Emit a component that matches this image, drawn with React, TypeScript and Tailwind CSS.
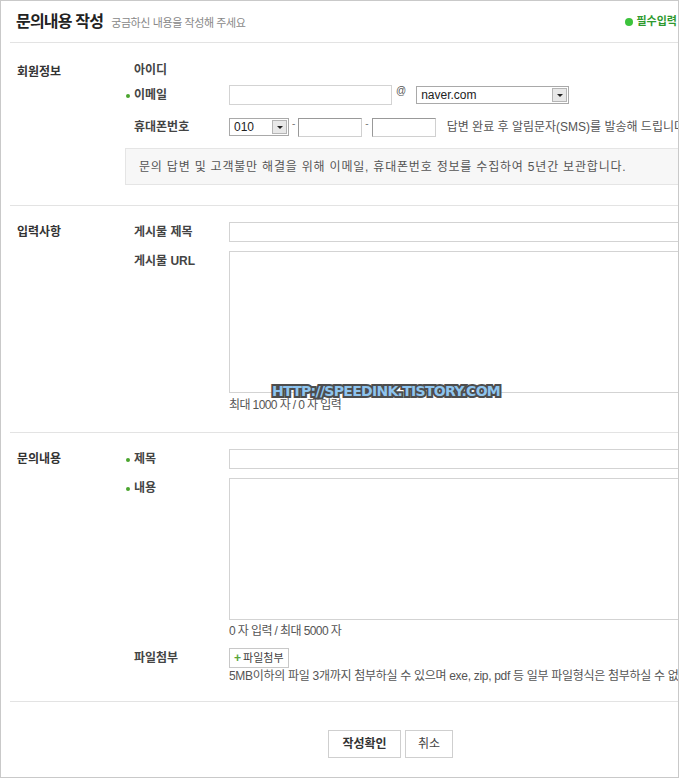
import React from 'react'

const font = 'font-["Liberation_Sans","Noto_Sans_CJK_KR",sans-serif]'

// 녹색 필수 표시 점
function Dot() {
  return <span className="absolute left-[-8px] top-[7px] h-[4px] w-[4px] rounded-full bg-[#4aa52e]" />
}

function FieldLabel({ children, required }: { children: React.ReactNode; required?: boolean }) {
  return (
    <div className="relative w-[95px] shrink-0 text-[12px] font-bold leading-[16px] text-[#444]">
      {required && <Dot />}
      {children}
    </div>
  )
}

function FakeSelect({ value, width }: { value: string; width: string }) {
  return (
    <div className={`flex h-[18px] items-center border border-[#a9a9a9] bg-white ${width}`}>
      <span className="flex-1 pl-[4px] text-[12px] leading-[16px] text-[#222]">{value}</span>
      <span className="mr-[1px] flex h-[14px] w-[15px] items-center justify-center border border-[#b5b5b5] bg-[#e8e8e8]">
        <span className="h-0 w-0 border-x-[3px] border-t-[3px] border-x-transparent border-t-[#222]" />
      </span>
    </div>
  )
}

export default function App() {
  return (
    <div className={`${font} h-[779px] w-[680px] bg-white`}>
      <div className="relative h-[778px] w-[679px] overflow-hidden border border-[#c9c9c9] bg-white">
        {/* 헤더 */}
        <div className="ml-[9px] flex h-[42px] w-[900px] shrink-0 items-center border-b border-[#e3e3e3]">
          <h1 className="ml-[6px] text-[16px] font-bold tracking-[-0.8px] text-[#222]">문의내용 작성</h1>
          <span className="ml-[8px] mt-[3px] text-[11px] tracking-[-0.4px] text-[#888]">궁금하신 내용을 작성해 주세요</span>
          <span className="w-[379px] shrink-0" />
          <span className="mt-[1px] h-[8px] w-[8px] shrink-0 rounded-full bg-[#3cc33c]" />
          <span className="ml-[4px] shrink-0 whitespace-nowrap text-[11px] font-bold text-[#2f9a2f]">필수입력</span>
        </div>

        {/* 회원정보 */}
        <div className="ml-[9px] flex w-[900px] border-b border-[#e3e3e3] pb-[20px] pt-[19px]">
          <div className="mt-[2px] w-[115px] shrink-0 pl-[7px] text-[12px] font-bold leading-[16px] text-[#333]">회원정보</div>
          <div className="flex-1">
            <div className="flex h-[16px] pl-[9px]">
              <FieldLabel>아이디</FieldLabel>
            </div>
            <div className="mt-[7px] flex h-[20px] items-start pl-[9px]">
              <div className="pt-[2px]">
                <FieldLabel required>이메일</FieldLabel>
              </div>
              <div className="h-[20px] w-[163px] border border-[#d3d3d3]" />
              <span className="ml-[4px] mt-[-2px] text-[10px] text-[#555]">@</span>
              <div className="ml-[10px] mt-[1px]">
                <FakeSelect value="naver.com" width="w-[153px]" />
              </div>
            </div>
            <div className="mt-[13px] flex h-[18px] items-center pl-[9px]">
              <FieldLabel>휴대폰번호</FieldLabel>
              <FakeSelect value="010" width="w-[60px]" />
              <span className="ml-[3px] mt-[-8px] text-[10px] text-[#777]">-</span>
              <div className="ml-[3px] h-[19px] w-[64px] border border-[#d0d0d0] border-l-[#999] border-t-[#999]" />
              <span className="ml-[3px] mt-[-8px] text-[10px] text-[#777]">-</span>
              <div className="ml-[3px] h-[19px] w-[64px] border border-[#d0d0d0] border-l-[#999] border-t-[#999]" />
              <span className="ml-[11px] text-[12px] text-[#555]">답변 완료 후 알림문자(SMS)를 발송해 드립니다.</span>
            </div>
            <div className="mt-[12px] flex h-[37px] items-center border border-[#e5e5e5] bg-[#f7f7f7] pl-[13px] text-[12px] tracking-[0.8px] text-[#555]">
              문의 답변 및 고객불만 해결을 위해 이메일, 휴대폰번호 정보를 수집하여 5년간 보관합니다.
            </div>
          </div>
        </div>

        {/* 입력사항 */}
        <div className="ml-[9px] flex w-[900px] border-b border-[#e3e3e3] pb-[19px] pt-[16px]">
          <div className="mt-[2px] w-[115px] shrink-0 pl-[7px] text-[12px] font-bold leading-[16px] text-[#333]">입력사항</div>
          <div className="flex-1 pl-[9px]">
            <div className="flex h-[20px] items-center">
              <FieldLabel>게시물 제목</FieldLabel>
              <div className="h-[20px] flex-1 border border-[#d3d3d3]" />
            </div>
            <div className="mt-[9px] flex">
              <div className="pt-[2px]">
                <FieldLabel>게시물 URL</FieldLabel>
              </div>
              <div className="flex-1">
                <div className="h-[142px] border border-[#d3d3d3]" />
                <div className="mt-[4px] text-[12px] leading-[16px] tracking-[-0.6px] text-[#555]">최대 1000 자 / 0 자 입력</div>
              </div>
            </div>
          </div>
        </div>

        {/* 문의내용 */}
        <div className="ml-[9px] flex w-[900px] border-b border-[#e3e3e3] pb-[17px] pt-[16px]">
          <div className="mt-[2px] w-[115px] shrink-0 pl-[7px] text-[12px] font-bold leading-[16px] text-[#333]">문의내용</div>
          <div className="flex-1 pl-[9px]">
            <div className="flex h-[20px] items-center">
              <FieldLabel required>제목</FieldLabel>
              <div className="h-[20px] flex-1 border border-[#d3d3d3]" />
            </div>
            <div className="mt-[9px] flex">
              <div className="pt-[2px]">
                <FieldLabel required>내용</FieldLabel>
              </div>
              <div className="flex-1">
                <div className="h-[142px] border border-[#d3d3d3]" />
                <div className="mt-[3px] text-[12px] leading-[16px] tracking-[-0.6px] text-[#555]">0 자 입력 / 최대 5000 자</div>
              </div>
            </div>
            <div className="mt-[9px] flex">
              <div className="pt-[2px]">
                <FieldLabel>파일첨부</FieldLabel>
              </div>
              <div className="flex-1">
                <button className="flex h-[20px] items-center border border-[#c8c8c8] bg-white px-[4px] text-[11px] text-[#444]">
                  <span className="mr-[2px] text-[12px] font-bold leading-none text-[#5aa53a]">+</span>
                  파일첨부
                </button>
                <div className="whitespace-nowrap text-[12px] leading-[16px] tracking-[-0.3px] text-[#555]">
                  5MB이하의 파일 3개까지 첨부하실 수 있으며 exe, zip, pdf 등 일부 파일형식은 첨부하실 수 없습니다.
                </div>
              </div>
            </div>
          </div>
        </div>

        {/* 버튼 */}
        <div className="flex gap-[4px] pl-[327px] pt-[28px]">
          <button className="h-[28px] w-[73px] border border-[#cfcfcf] bg-white text-[12px] font-bold text-[#333]">작성확인</button>
          <button className="h-[28px] w-[48px] border border-[#cfcfcf] bg-white text-[12px] text-[#444]">취소</button>
        </div>

        {/* 워터마크 */}
        <div className="absolute left-[271px] top-[380px] font-['DejaVu_Sans',sans-serif] text-[14px] font-bold tracking-[-0.7px] text-[#8ec4ee] [-webkit-text-stroke:4px_#4d4d4d] [paint-order:stroke_fill]">
          HTTP://SPEEDINK.TISTORY.COM
        </div>
      </div>
    </div>
  )
}
